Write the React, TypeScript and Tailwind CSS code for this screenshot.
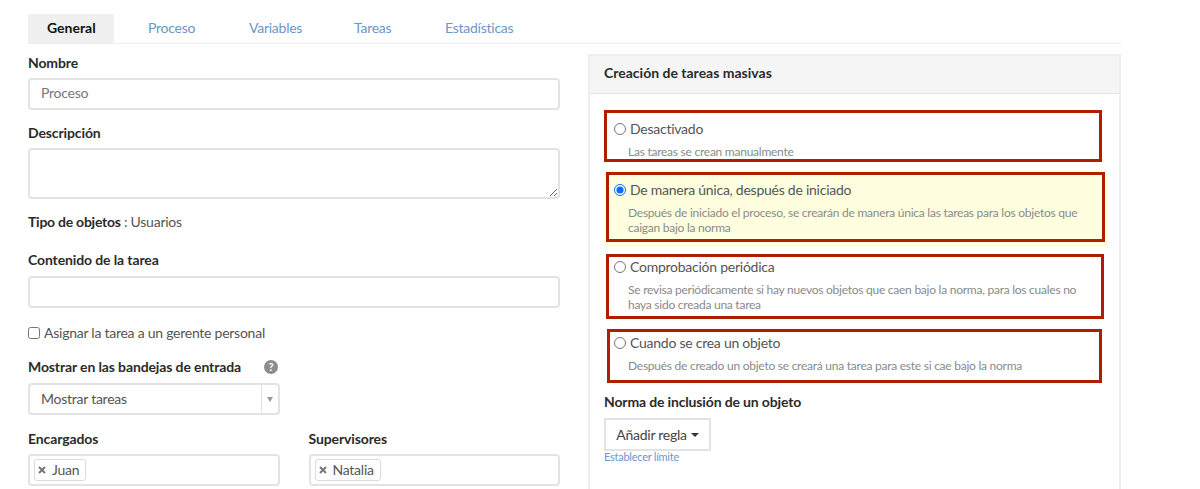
const tabs = [
  { name: 'Proceso', className: 'ml-[34px] w-[101px]' },
  { name: 'Variables', className: 'w-[105px]' },
  { name: 'Tareas', className: 'w-[91px]' },
  { name: 'Estadísticas', className: 'w-[90px]' },
];

const inputClass =
  'block h-8 w-full rounded-[4px] border-2 border-[#e3e3e3] bg-white px-[11px] pb-[3px] text-sm text-[#555] outline-none placeholder:text-[#777]';
const labelClass = 'block text-sm leading-5 font-bold tracking-[-0.12px] text-[#2b2b2b]';

function Tag({ name }: { name: string }) {
  return (
    <span className="flex h-[22px] items-center gap-[6px] rounded-[3px] border border-[#dcdcdc] pr-[6px] pl-[3px] text-sm text-[#555]">
      <svg width="8" height="8" viewBox="0 0 8 8" className="text-[#777]">
        <path d="M1 1l6 6M7 1L1 7" stroke="currentColor" strokeWidth="2" />
      </svg>
      {name}
    </span>
  );
}

function Option({
  title,
  hint,
  checked,
  className,
}: {
  title: string;
  hint: string;
  checked?: boolean;
  className: string;
}) {
  return (
    <label className={`block border-[3px] border-[#b01e00] ${className}`}>
      <span className="flex items-center gap-[4px] text-sm leading-5 text-[#555]">
        <input type="radio" name="mode" defaultChecked={checked} className="m-0 size-[12px] accent-[#0b6ff0]" />
        {title}
      </span>
      <span className="mt-[5px] block pr-[6px] pl-[14px] text-xs leading-[15px] text-[#8a8a8a]">{hint}</span>
    </label>
  );
}

export default function App() {
  return (
    <div className="h-[489px] w-[1200px] overflow-hidden bg-white pt-[14px] pl-[28px] font-['Lato',sans-serif] tracking-[-0.25px]">
      <div className="flex h-[30px] w-[1093px] border-b border-[#eeeeee]">
        <div className="w-[86px] bg-[#f0f0f0] pl-[19px] text-sm leading-[28px] font-bold tracking-normal text-[#111]">
          General
        </div>
        {tabs.map((tab) => (
          <div key={tab.name} className={`text-sm leading-[28px] text-[#6a97cc] ${tab.className}`}>
            {tab.name}
          </div>
        ))}
      </div>

      <div className="flex gap-[28px]">
        <div className="w-[532px] pt-[9px]">
          <label className={labelClass}>Nombre</label>
          <input className={`${inputClass} mt-[5px]`} placeholder="Proceso" />

          <label className={`${labelClass} mt-[13px]`}>Descripción</label>
          <textarea className="mt-[5px] block h-[51px] w-full rounded-[4px] border-2 border-[#e3e3e3] outline-none" />

          <p className="mt-[13px] text-sm leading-5 text-[#555]">
            <b className="text-[#2b2b2b]">Tipo de objetos</b> : Usuarios
          </p>

          <label className={`${labelClass} mt-[18px]`}>Contenido de la tarea</label>
          <input className={`${inputClass} mt-[6px]`} />

          <label className="mt-[15px] flex items-center gap-[4px] text-sm leading-5 text-[#555]">
            <input type="checkbox" className="m-0 size-[12px]" />
            Asignar la tarea a un gerente personal
          </label>

          <div className="mt-[14px] flex w-[252px] items-center justify-between pr-[2px]">
            <label className={labelClass}>Mostrar en las bandejas de entrada</label>
            <svg width="14" height="14" viewBox="0 0 14 14">
              <circle cx="7" cy="7" r="7" fill="#8c8c8c" />
              <text x="7" y="11" textAnchor="middle" fontSize="11" fontWeight="700" fill="#fff">
                ?
              </text>
            </svg>
          </div>
          <div className="mt-[6px] flex h-8 w-[252px] items-center rounded-[4px] border-2 border-[#e3e3e3] text-sm text-[#555]">
            <span className="flex-1 pl-[11px]">Mostrar tareas</span>
            <span className="flex h-full w-[17px] items-center justify-center border-l border-[#e3e3e3]">
              <span className="border-x-[3px] border-t-[5px] border-x-transparent border-t-[#999]" />
            </span>
          </div>

          <div className="mt-[14px] grid grid-cols-2 gap-[29px]">
            <div>
              <label className={labelClass}>Encargados</label>
              <div className="mt-[5px] flex h-8 items-center rounded-[4px] border-2 border-[#e3e3e3] pl-1">
                <Tag name="Juan" />
              </div>
            </div>
            <div>
              <label className={labelClass}>Supervisores</label>
              <div className="mt-[5px] flex h-8 items-center rounded-[4px] border-2 border-[#e3e3e3] pl-1">
                <Tag name="Natalia" />
              </div>
            </div>
          </div>
        </div>

        <div className="mt-[10px] h-[440px] w-[533px] border-x-2 border-t-2 border-[#eeeeee]">
          <div className="h-[38px] border-b border-[#e6e6e6] bg-[#f5f5f5] px-[14px] text-sm leading-[33px] font-bold tracking-normal text-[#2b2b2b]">
            Creación de tareas masivas
          </div>
          <div className="pt-[16px] pl-[14px]">
            <Option
              className="h-[52px] w-[498px] pt-[6px] pl-[7px]"
              title="Desactivado"
              hint="Las tareas se crean manualmente"
            />
            <div className="mt-[8px] w-[503px] bg-[#ffffe0] pt-[2px] pb-[5px] pl-[2px]">
              <Option
                checked
                className="h-[70px] w-[499px] pt-[5px] pl-[5px]"
                title="De manera única, después de iniciado"
                hint="Después de iniciado el proceso, se crearán de manera única las tareas para los objetos que caigan bajo la norma"
              />
            </div>
            <Option
              className="mt-[7px] ml-[2px] h-[65px] w-[498px] pl-[5px]"
              title="Comprobación periódica"
              hint="Se revisa periódicamente si hay nuevos objetos que caen bajo la norma, para los cuales no haya sido creada una tarea"
            />
            <Option
              className="mt-[10px] ml-[3px] h-[54px] w-[495px] pt-[1px] pl-[4px]"
              title="Cuando se crea un objeto"
              hint="Después de creado un objeto se creará una tarea para este si cae bajo la norma"
            />
            <h3 className="mt-[9px] text-sm leading-5 font-bold tracking-[-0.15px] text-[#2b2b2b]">
              Norma de inclusión de un objeto
            </h3>
            <button className="mt-[6px] flex h-[33px] w-[107px] items-center justify-center gap-[4px] border-2 border-[#e3e3e3] text-sm text-[#444]">
              Añadir regla
              <span className="border-x-[4px] border-t-[4px] border-x-transparent border-t-[#333]" />
            </button>
            <a className="block text-[11px] leading-[12px] text-[#6a97cc]">Establecer límite</a>
          </div>
        </div>
      </div>
    </div>
  );
}
